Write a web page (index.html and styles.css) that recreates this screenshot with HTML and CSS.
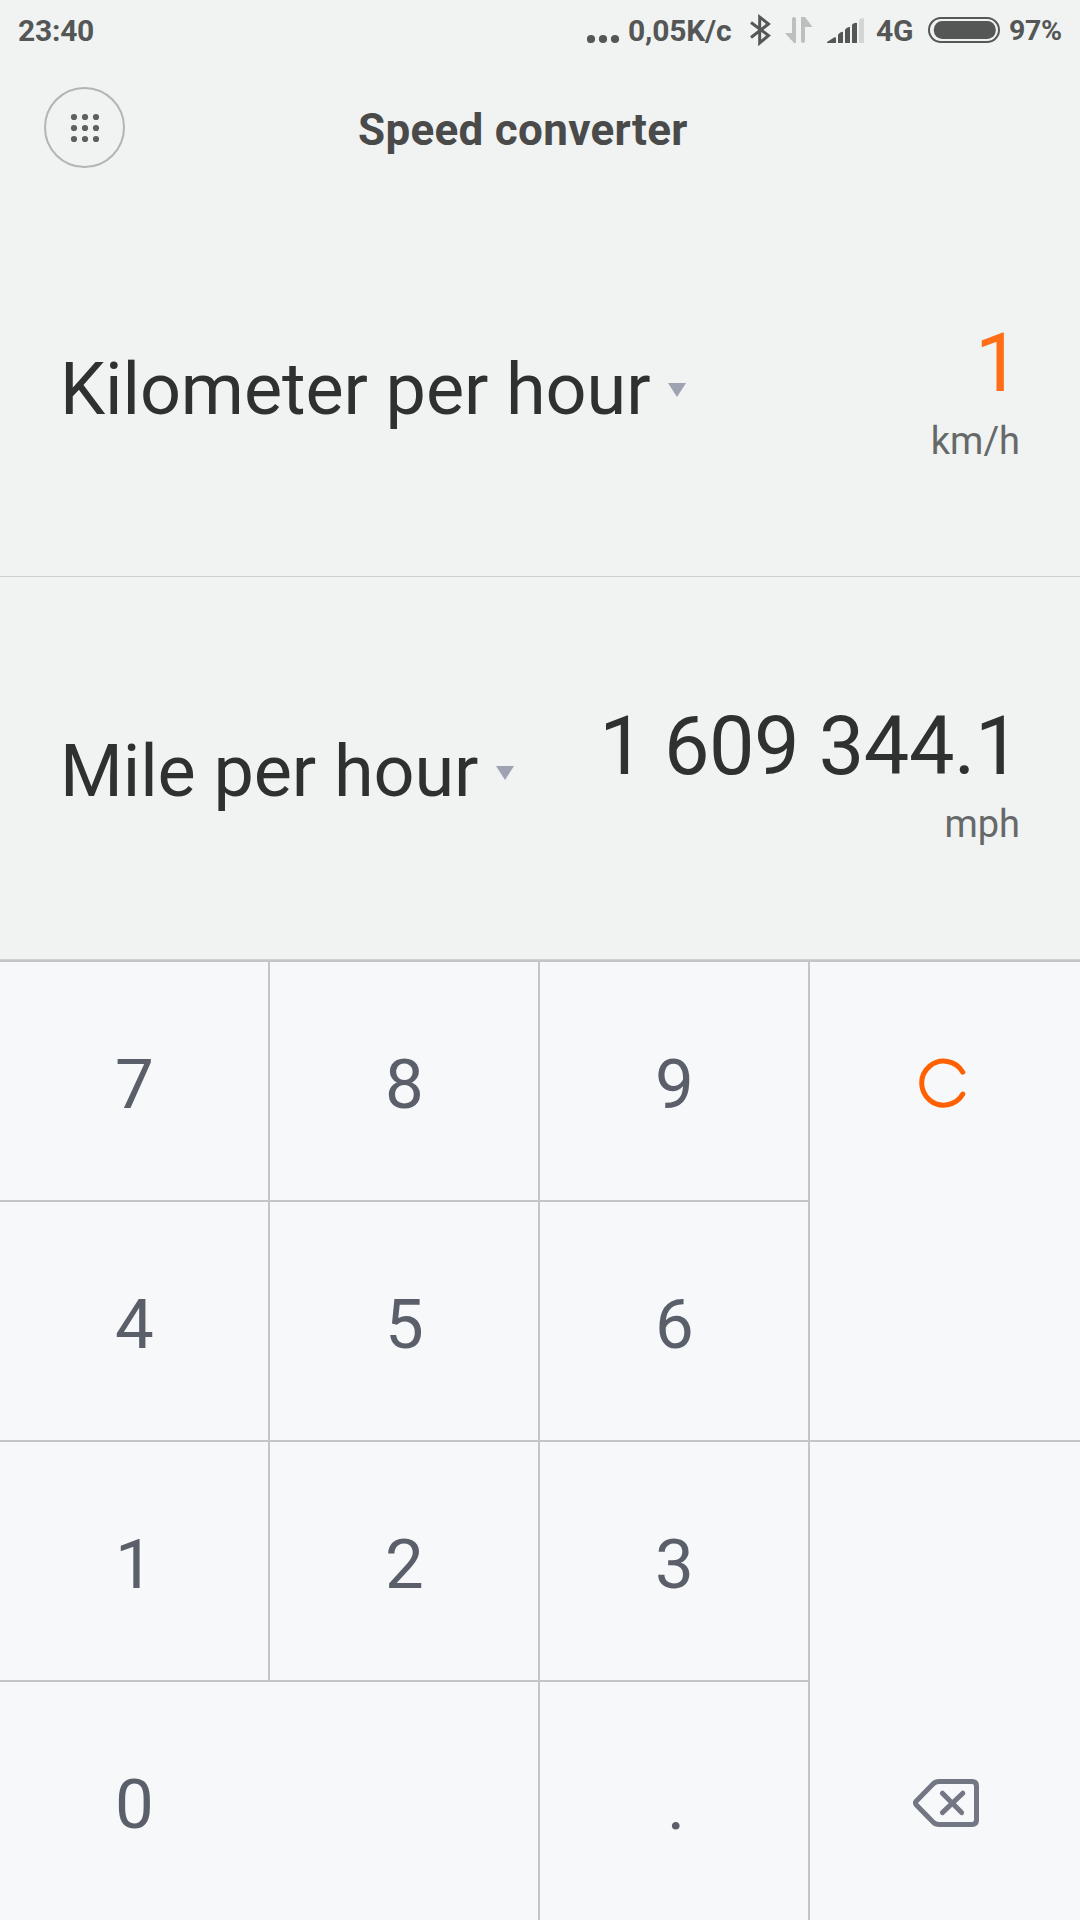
FILE: index.html
```html
<!DOCTYPE html>
<html lang="en">
<head>
<meta charset="utf-8">
<title>Speed converter</title>
<link rel="stylesheet" href="styles.css">
</head>
<body>
<div class="screen">
  <div class="status">
    <span class="clock">23:40</span>
    <svg class="dots" width="40" height="60" viewBox="0 0 40 60"><circle cx="4" cy="39" r="4.1"/><circle cx="16" cy="39" r="4.1"/><circle cx="28" cy="39" r="4.1"/></svg>
    <span class="rate">0,05K/c</span>
    <svg width="34" height="60" viewBox="0 0 34 60"><path class="bt" d="M3 22.5 20.5 35.5 11.7 43V17L20.5 24 3 37.5"/></svg>
    <svg class="faded" width="44" height="60" viewBox="0 0 44 60"><path d="M3 33H10V19Q10 17 12 17T14 19V43H12ZM19 17H23L30.500 27H23V41Q23 43 21 43T19 41Z"/></svg>
    <svg width="50" height="60" viewBox="0 0 50 60"><path d="M1 43V42L8 37.600Q10 36.600 10 38V43ZM12 43V35Q12 34 14 32.700T17 32V43ZM19 43V30Q19 29 21 27.800T24 27V43ZM26 43V25Q26 24 28 23.200T31 23V43Z"/><path class="weak" d="M33 43V20.500Q33 19.500 35 18.500T38 18.500V43Z"/></svg>
    <span class="net">4G</span>
    <svg width="80" height="60" viewBox="0 0 80 60"><rect class="shell" x="1" y="18" width="70" height="24" rx="12"/><rect x="5.800" y="21" width="62" height="18" rx="8.500"/></svg>
    <span class="charge">97%</span>
  </div>

  <header class="header">
    <button class="menu" aria-label="Converters">
      <svg width="30" height="30" viewBox="0 0 30 30"><circle cx="4" cy="4" r="3.100"/><circle cx="15" cy="4" r="3.100"/><circle cx="26" cy="4" r="3.100"/><circle cx="4" cy="15" r="3.100"/><circle cx="15" cy="15" r="3.100"/><circle cx="26" cy="15" r="3.100"/><circle cx="4" cy="26" r="3.100"/><circle cx="15" cy="26" r="3.100"/><circle cx="26" cy="26" r="3.100"/></svg>
    </button>
    <h1 class="title">Speed converter</h1>
  </header>

  <main>
    <section class="row">
      <div class="label">Kilometer per hour<svg class="caret" width="18" height="14" viewBox="0 0 18 14"><path d="M0 0H18L9 14Z"/></svg></div>
      <div class="result"><div class="value active">1</div><div class="unit">km/h</div></div>
    </section>
    <section class="row">
      <div class="label">Mile per hour<svg class="caret" width="18" height="14" viewBox="0 0 18 14"><path d="M0 0H18L9 14Z"/></svg></div>
      <div class="result"><div class="value">1 609 344.1</div><div class="unit">mph</div></div>
    </section>
  </main>

  <div class="keypad">
    <div class="key">7</div><div class="key">8</div><div class="key">9</div>
    <div class="key side clear" aria-label="Clear"><svg width="50" height="50" viewBox="0 0 50 50"><path d="M43.800 14.200A22 22 0 1 0 43.800 36"/></svg></div>
    <div class="key">4</div><div class="key">5</div><div class="key">6</div>
    <div class="key">1</div><div class="key">2</div><div class="key">3</div>
    <div class="key side erase" aria-label="Backspace"><svg width="72" height="54" viewBox="0 0 72 54"><path d="M29 5.500H62Q66.500 5.500 66.500 10V44Q66.500 48.500 62 48.500H29Q25.500 48.500 23 46L6.400 29Q4.600 27 6.400 25L23 8Q25.500 5.500 29 5.500ZM32.400 17.200 51.600 36.600M52.800 17.200 32.400 36.600"/></svg></div>
    <div class="key zero">0</div><div class="key point">.</div>
  </div>
</div>
</body>
</html>
```
FILE: styles.css
```css
* { box-sizing: border-box; }
body {
  margin: 0;
  background: #f0f3f2;
  font-family: Roboto, "Liberation Sans", sans-serif;
}
.screen {
  width: 1080px;
  height: 1920px;
  display: flex;
  flex-direction: column;
  overflow: hidden;
}
svg { display: block; flex: none; }

.status {
  height: 62px;
  padding-left: 18px;
  display: flex;
  font-size: 30px;
  line-height: 61px;
  font-weight: 700;
  color: #555756;
  fill: #555756;
  white-space: nowrap;
}
.clock { width: 569px; letter-spacing: -0.25px; }
.rate { width: 121px; padding-left: 1px; letter-spacing: -0.2px; }
.net { width: 52px; letter-spacing: -0.3px; }
.charge { font-size: 28.5px; line-height: 61px; letter-spacing: -0.4px; padding-left: 1px; }
.bt { fill: none; stroke: #555756; stroke-width: 3; }
.faded { fill: #bdbfbe; }
.weak { fill: #d4d6d5; }
.shell { fill: none; stroke: #555756; stroke-width: 2; }

.header {
  height: 131px;
  padding: 25px 44px 0;
  display: flex;
}
.menu {
  width: 81px;
  height: 81px;
  padding: 1px 0 0 1px;
  border: 2px solid #b3b5b4;
  border-radius: 50%;
  background: none;
  display: flex;
  align-items: center;
  justify-content: center;
  fill: #5e605f;
}
.title {
  margin: 0 0 0 233px;
  font-size: 44px;
  line-height: 87px;
  letter-spacing: 0.3px;
  font-weight: 700;
  color: #4a4a4a;
}

.row {
  height: 384px;
  padding: 0 60px;
  display: flex;
  justify-content: space-between;
  color: #2f3130;
  white-space: nowrap;
}
.row:first-child { border-bottom: 1px solid #cdcfce; }
.row + .row { height: 383px; border-bottom: 1px solid #d0d2d1; }
.label {
  height: 84px;
  margin-top: 155px;
  display: flex;
  align-items: center;
  font-size: 72px;
  line-height: 84px;
  letter-spacing: -0.1px;
}
.caret { margin: 0 0 0 18px; fill: #9fa3b1; }
.row + .row .caret { margin-top: 2px; }
.result { padding-top: 128px; text-align: right; }
.row + .row .label { margin-top: 153px; }
.row + .row .result { padding-top: 127px; }
.value { font-size: 81px; line-height: 86px; letter-spacing: -0.45px; }
.active { color: #ff6d17; }
.unit { margin-top: 11px; font-size: 38px; line-height: 46px; color: #666968; }

.keypad {
  height: 960px;
  display: grid;
  grid-template-columns: repeat(4, 270px);
  grid-template-rows: repeat(4, 240px);
  background: #f7f8fa;
  font-size: 69px;
  line-height: 80px;
  color: #5b5f69;
}
.key {
  height: 240px;
  padding: 8px 0 0 1px;
  border: solid #c4c5c7;
  border-width: 2px 2px 0 0;
  display: flex;
  align-items: center;
  justify-content: center;
}
.side {
  grid-column: 4;
  grid-row: span 2;
  height: 480px;
  border-right: 0;
}
.clear { align-items: flex-start; padding: 96px 2px 0 0; }
.clear path { fill: none; stroke: #ff6100; stroke-width: 5; stroke-linecap: round; }
.erase { align-items: flex-end; padding: 0 0 90px 2px; }
.erase path { fill: none; stroke: #737683; stroke-width: 5; stroke-linecap: round; }
.zero { grid-column: span 2; padding-right: 270px; }
.point { padding: 10px 0 0 4px; }
```
